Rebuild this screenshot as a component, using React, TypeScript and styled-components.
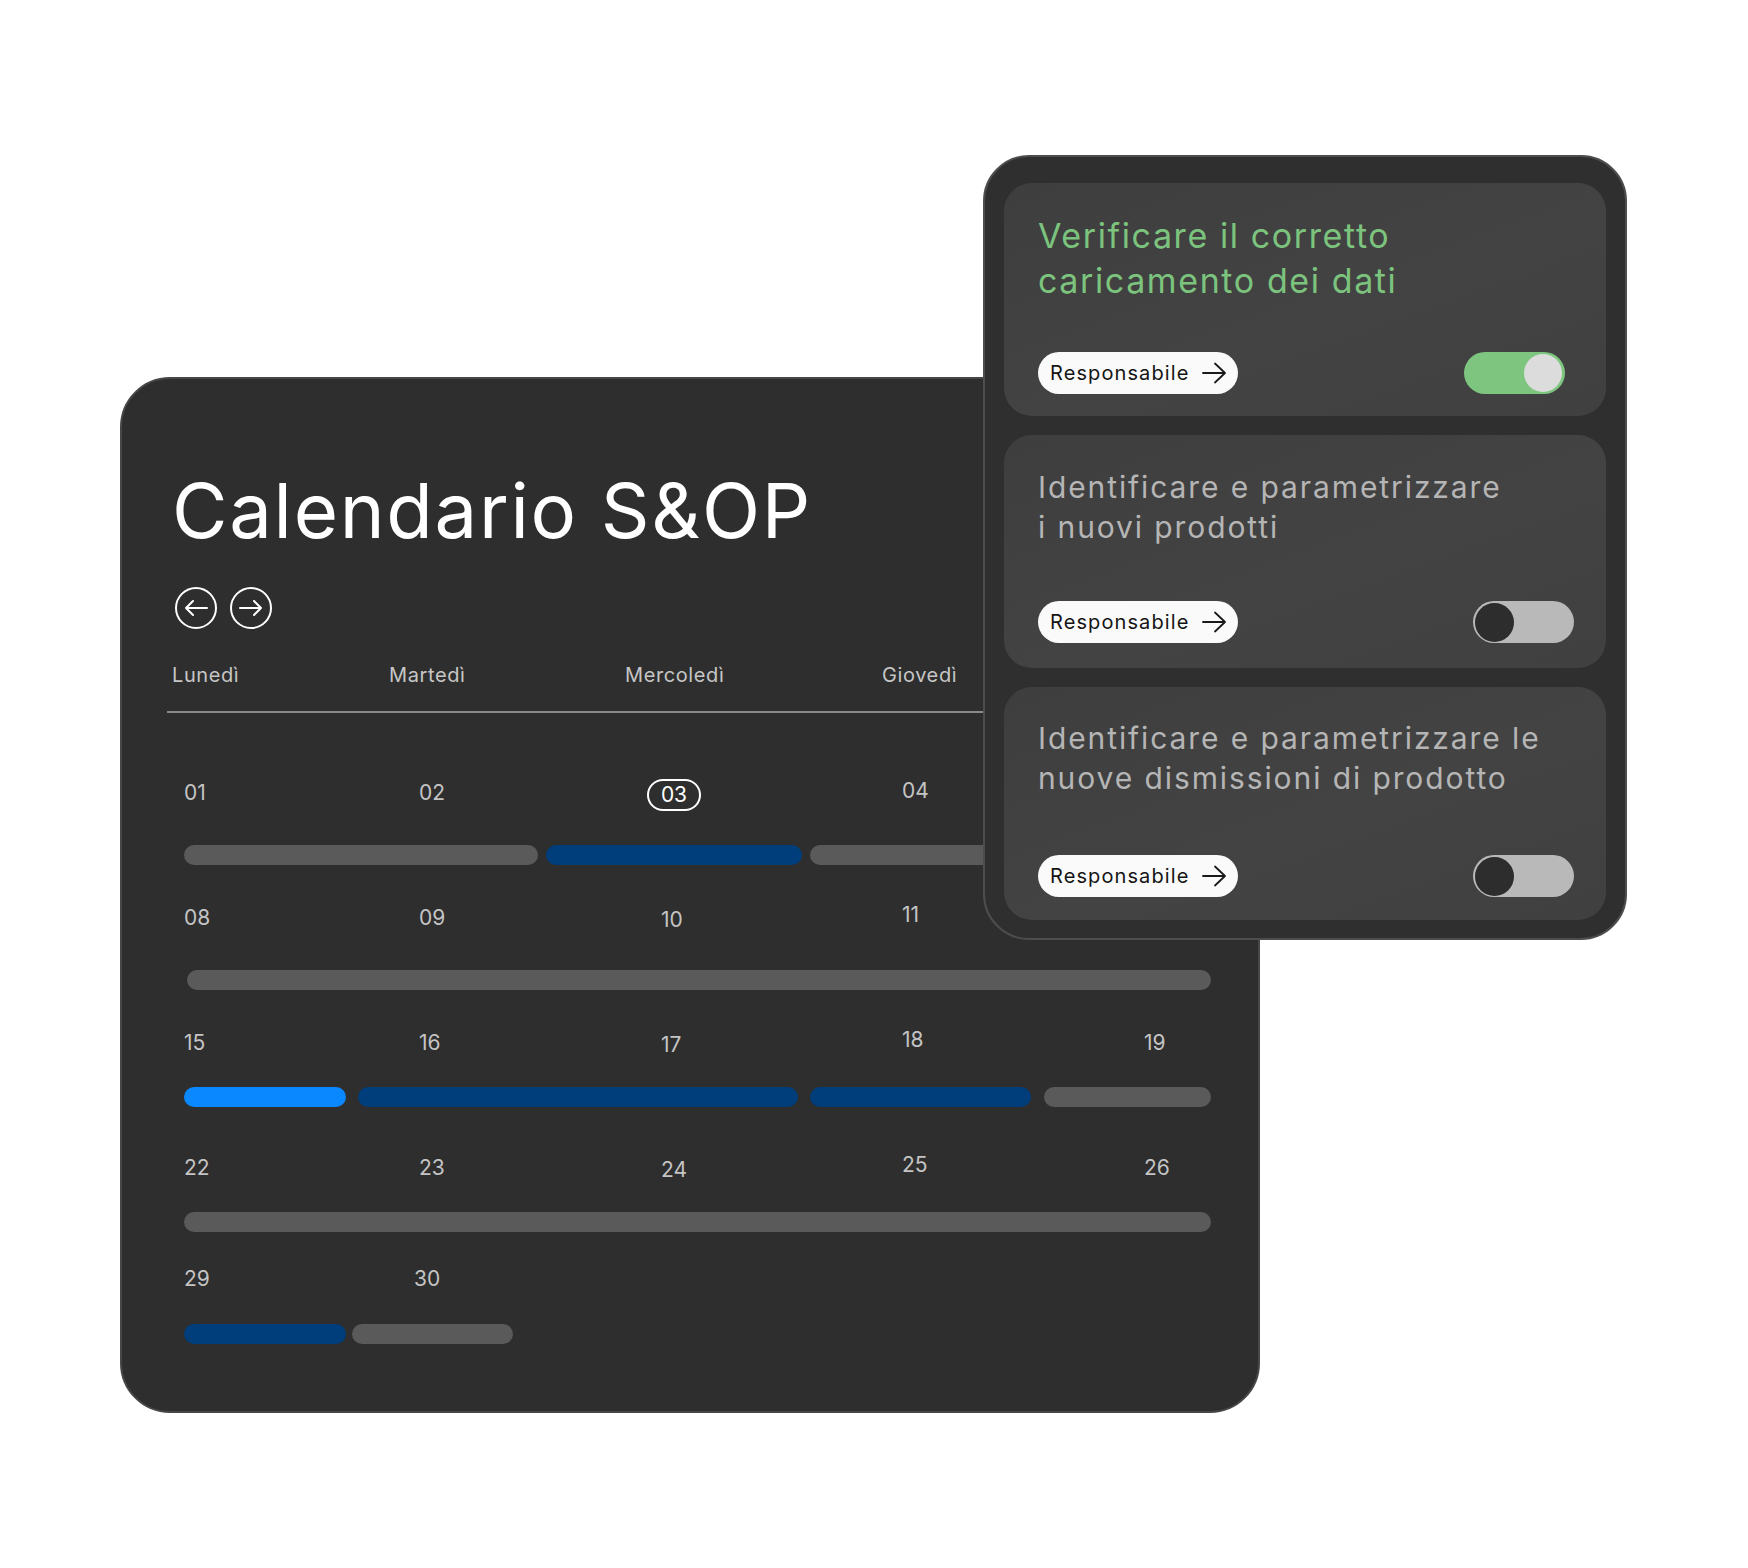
import React from 'react';
import styled, { createGlobalStyle } from 'styled-components';

const Global = createGlobalStyle`
  html, body { margin: 0; padding: 0; background: #ffffff; }
  body { font-family: Inter, "Liberation Sans", sans-serif; }
  *, *::before, *::after { box-sizing: border-box; }
`;

const GRAY = '#5a5a5a';
const DARK_BLUE = '#003d7b';
const BLUE = '#0a88ff';

const Stage = styled.div`
  position: relative;
  width: 1748px;
  height: 1568px;
  padding: 377px 0 0 120px;
  overflow: hidden;
`;

const CalendarCard = styled.section`
  width: 1140px;
  height: 1036px;
  background: #2e2e2e;
  border: 2px solid #474747;
  border-radius: 50px;
  padding: 93px 0 0 45px;
  display: flex;
  flex-direction: column;
`;

const Title = styled.h1`
  margin: 0 0 0 5px;
  font-family: Inter, "Liberation Sans", sans-serif;
  font-weight: 400;
  font-size: 76px;
  line-height: 76px;
  letter-spacing: 1.7px;
  color: #ffffff;
`;

const NavRow = styled.div`
  display: flex;
  gap: 13px;
  margin: 39px 0 0 8px;
`;

const NavButton = styled.button`
  width: 42px;
  height: 42px;
  padding: 0;
  border: 2px solid #ffffff;
  border-radius: 50%;
  background: transparent;
  display: grid;
  place-items: center;
  cursor: pointer;
`;

const DayHeader = styled.div`
  display: grid;
  grid-template-columns: 217px 236px 257px 1fr;
  margin: 34px 0 0 5px;
  width: 800px;
  font-size: 20px;
  line-height: 24px;
  letter-spacing: 0.6px;
  color: #c6c6c6;
`;

const Divider = styled.div`
  margin-top: 24px;
  width: 1045px;
  height: 2px;
  background: #8a8a8a;
`;

const Weeks = styled.div`
  margin-top: 68px;
  padding-left: 17px;
  display: flex;
  flex-direction: column;
`;

const Week = styled.div<{ $h: number }>`
  height: ${(p) => p.$h}px;
  display: flex;
  flex-direction: column;
`;

const NumRow = styled.div<{ $h: number }>`
  height: ${(p) => p.$h}px;
  display: grid;
  grid-template-columns: 235px 242px 241px 242px 1fr;
  align-items: start;
`;

const DayNum = styled.span<{ $dx: number; $dy: number }>`
  justify-self: start;
  font-size: 21px;
  line-height: 24px;
  color: #c4c4c4;
  transform: translate(${(p) => p.$dx}px, ${(p) => p.$dy}px);
`;

const TodayNum = styled.span`
  justify-self: start;
  display: inline-flex;
  align-items: center;
  justify-content: center;
  height: 32px;
  width: 54px;
  margin: -2px 0 0 -14px;
  border: 2px solid #ffffff;
  border-radius: 16px;
  font-size: 21px;
  line-height: 24px;
  color: #ffffff;
`;

const BarRow = styled.div`
  display: flex;
  height: 20px;
`;

const Bar = styled.div<{ $w: number; $c: string; $ml: number }>`
  flex: none;
  width: ${(p) => p.$w}px;
  height: 20px;
  margin-left: ${(p) => p.$ml}px;
  border-radius: 10px;
  background: ${(p) => p.$c};
`;

const Panel = styled.aside`
  position: absolute;
  left: 983px;
  top: 155px;
  width: 644px;
  height: 785px;
  background: #2f2f2f;
  border: 2px solid #4d4d4d;
  border-radius: 46px;
  padding: 26px 19px 0;
  display: flex;
  flex-direction: column;
  gap: 19px;
`;

const TaskCard = styled.div<{ $pt: number; $pb: number }>`
  flex: none;
  height: 233px;
  border-radius: 28px;
  background: linear-gradient(160deg, #3e3e3e 0%, #434343 55%, #404040 100%);
  padding: ${(p) => p.$pt}px 32px ${(p) => p.$pb}px 34px;
  display: flex;
  flex-direction: column;
  justify-content: space-between;
`;

const TaskTitle = styled.p<{ $active?: boolean }>`
  margin: 0;
  font-weight: 400;
  font-size: ${(p) => (p.$active ? 34 : 30)}px;
  line-height: ${(p) => (p.$active ? 45 : 40)}px;
  letter-spacing: ${(p) => (p.$active ? 1.6 : 1.9)}px;
  color: ${(p) => (p.$active ? '#7cc47e' : '#b5b5b5')};
`;

const TaskFooter = styled.div`
  display: flex;
  align-items: center;
  justify-content: space-between;
`;

const OwnerPill = styled.button`
  display: inline-flex;
  align-items: center;
  gap: 13px;
  height: 42px;
  padding: 0 11px 0 12px;
  border: none;
  border-radius: 21px;
  background: #fafafa;
  font-family: Inter, "Liberation Sans", sans-serif;
  font-size: 20px;
  letter-spacing: 1.1px;
  color: #141414;
  cursor: pointer;
`;

const Toggle = styled.div<{ $on: boolean }>`
  position: relative;
  width: 101px;
  height: 42px;
  margin-right: ${(p) => (p.$on ? 9 : 0)}px;
  border-radius: 21px;
  background: ${(p) => (p.$on ? '#7ec67f' : '#b9b9b9')};
`;

const Knob = styled.span<{ $on: boolean }>`
  position: absolute;
  top: ${(p) => (p.$on ? 2 : 1.5)}px;
  ${(p) => (p.$on ? 'right: 3px;' : 'left: 2px;')}
  width: ${(p) => (p.$on ? 38 : 39)}px;
  height: ${(p) => (p.$on ? 38 : 39)}px;
  border-radius: 50%;
  background: ${(p) => (p.$on ? '#dcdcdc' : '#2d2d2d')};
`;

const ArrowLeft = () => (
  <svg width="24" height="16" viewBox="0 0 24 16" fill="none">
    <path d="M23 8H2M9 1L2 8l7 7" stroke="#fff" strokeWidth="2" strokeLinecap="round" strokeLinejoin="round" />
  </svg>
);

const ArrowRight = () => (
  <svg width="24" height="16" viewBox="0 0 24 16" fill="none">
    <path d="M1 8h21M15 1l7 7-7 7" stroke="#fff" strokeWidth="2" strokeLinecap="round" strokeLinejoin="round" />
  </svg>
);

const PillArrow = () => (
  <svg width="25" height="22" viewBox="0 0 25 22" fill="none">
    <path d="M1 11h22M13 1.5l10 9.5-10 9.5" stroke="#1a1a1a" strokeWidth="1.8" strokeLinecap="round" strokeLinejoin="round" />
  </svg>
);

type Day = { n: string; dx?: number; dy?: number; today?: boolean };
type BarSpec = { w: number; c: string; ml?: number };
type WeekSpec = { h: number; off: number; days: Day[]; bars: BarSpec[] };

const weeks: WeekSpec[] = [
  {
    h: 125,
    off: 64,
    days: [{ n: '01' }, { n: '02' }, { n: '03', today: true }, { n: '04', dy: -2 }],
    bars: [
      { w: 354, c: GRAY },
      { w: 256, c: DARK_BLUE, ml: 8 },
      { w: 402, c: GRAY, ml: 8 },
    ],
  },
  {
    h: 125,
    off: 64,
    days: [{ n: '08' }, { n: '09' }, { n: '10', dy: 2 }, { n: '11', dy: -3 }],
    bars: [{ w: 1024, c: GRAY, ml: 3 }],
  },
  {
    h: 125,
    off: 56,
    days: [{ n: '15' }, { n: '16' }, { n: '17', dy: 2 }, { n: '18', dy: -3 }, { n: '19' }],
    bars: [
      { w: 162, c: BLUE },
      { w: 440, c: DARK_BLUE, ml: 12 },
      { w: 221, c: DARK_BLUE, ml: 12 },
      { w: 167, c: GRAY, ml: 13 },
    ],
  },
  {
    h: 111,
    off: 56,
    days: [{ n: '22' }, { n: '23' }, { n: '24', dy: 2 }, { n: '25', dy: -3 }, { n: '26' }],
    bars: [{ w: 1027, c: GRAY }],
  },
  {
    h: 80,
    off: 57,
    days: [{ n: '29' }, { n: '30', dx: -5 }],
    bars: [
      { w: 162, c: DARK_BLUE },
      { w: 161, c: GRAY, ml: 6 },
    ],
  },
];

const tasks = [
  { title: ['Verificare il corretto', 'caricamento dei dati'], on: true, pt: 30, pb: 22 },
  { title: ['Identificare e parametrizzare', 'i nuovi prodotti'], on: false, pt: 32, pb: 25 },
  { title: ['Identificare e parametrizzare le', 'nuove dismissioni di prodotto'], on: false, pt: 31, pb: 23 },
];

const dayNames = ['Lunedì', 'Martedì', 'Mercoledì', 'Giovedì'];

export default function App() {
  return (
    <>
      <Global />
      <Stage>
        <CalendarCard>
          <Title>Calendario S&amp;OP</Title>
          <NavRow>
            <NavButton aria-label="Precedente">
              <ArrowLeft />
            </NavButton>
            <NavButton aria-label="Successivo">
              <ArrowRight />
            </NavButton>
          </NavRow>
          <DayHeader>
            {dayNames.map((d) => (
              <span key={d}>{d}</span>
            ))}
          </DayHeader>
          <Divider />
          <Weeks>
            {weeks.map((w, i) => (
              <Week key={i} $h={w.h}>
                <NumRow $h={w.off}>
                  {w.days.map((d) =>
                    d.today ? (
                      <TodayNum key={d.n}>{d.n}</TodayNum>
                    ) : (
                      <DayNum key={d.n} $dx={d.dx ?? 0} $dy={d.dy ?? 0}>
                        {d.n}
                      </DayNum>
                    ),
                  )}
                </NumRow>
                <BarRow>
                  {w.bars.map((b, j) => (
                    <Bar key={j} $w={b.w} $c={b.c} $ml={b.ml ?? 0} />
                  ))}
                </BarRow>
              </Week>
            ))}
          </Weeks>
        </CalendarCard>

        <Panel>
          {tasks.map((t, i) => (
            <TaskCard key={i} $pt={t.pt} $pb={t.pb}>
              <TaskTitle $active={t.on}>
                {t.title[0]}
                <br />
                {t.title[1]}
              </TaskTitle>
              <TaskFooter>
                <OwnerPill>
                  Responsabile
                  <PillArrow />
                </OwnerPill>
                <Toggle $on={t.on}>
                  <Knob $on={t.on} />
                </Toggle>
              </TaskFooter>
            </TaskCard>
          ))}
        </Panel>
      </Stage>
    </>
  );
}
